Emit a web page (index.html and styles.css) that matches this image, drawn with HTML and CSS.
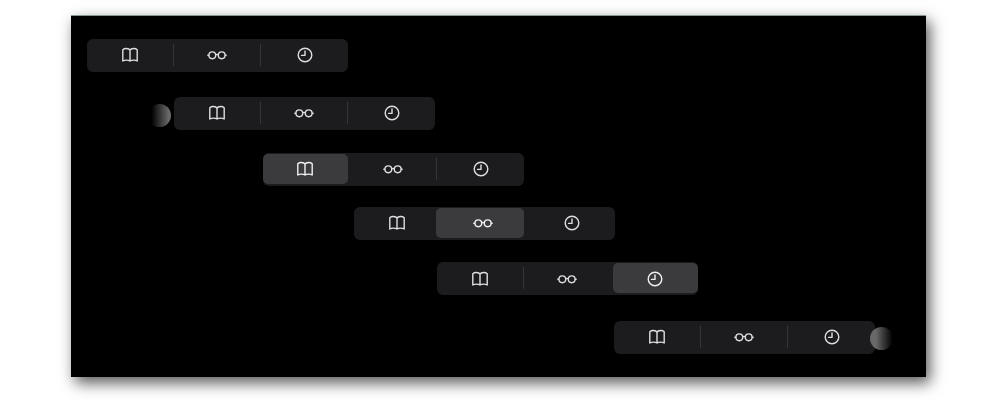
FILE: index.html
```html
<!DOCTYPE html>
<html lang="en">
<head>
<meta charset="utf-8">
<meta name="viewport" content="width=device-width, initial-scale=1">
<link rel="stylesheet" href="styles.css">
</head>
<body>
<svg class="sprite" aria-hidden="true">
  <symbol id="book" viewBox="0 0 18 16">
    <path d="M9 3.200C7.800 1.200 3.800.9 1.800 2.800V14C3.800 12.800 7.300 12.900 9 14C10.700 12.900 14.200 12.800 16.200 14V2.800C14.200.9 10.200 1.200 9 3.200ZM9 3.200V14"/>
  </symbol>
  <symbol id="glasses" viewBox="0 0 20 16">
    <circle cx="5.300" cy="8.300" r="3.400"/>
    <circle cx="14.700" cy="8.300" r="3.400"/>
    <path d="M.8 8.200H1.700M18.300 8.200H19.200M8.700 7.800Q10 7 11.300 7.800"/>
  </symbol>
  <symbol id="clock" viewBox="0 0 16 16">
    <circle cx="8" cy="8" r="6.800"/>
    <path d="M8 4V8.400H4.500"/>
  </symbol>
</svg>
<main class="panel">
  <div class="bar bar-1" role="group">
    <button class="segment" aria-label="Book"><svg class="icon icon-book"><use href="#book"/></svg></button>
    <button class="segment" aria-label="Glasses"><svg class="icon icon-glasses"><use href="#glasses"/></svg></button>
    <button class="segment" aria-label="Clock"><svg class="icon icon-clock"><use href="#clock"/></svg></button>
  </div>
  <div class="bar bar-2" role="group">
    <span class="orb orb-before"></span>
    <button class="segment" aria-label="Book"><svg class="icon icon-book"><use href="#book"/></svg></button>
    <button class="segment" aria-label="Glasses"><svg class="icon icon-glasses"><use href="#glasses"/></svg></button>
    <button class="segment" aria-label="Clock"><svg class="icon icon-clock"><use href="#clock"/></svg></button>
  </div>
  <div class="bar bar-3" role="group">
    <button class="segment selected first" aria-label="Book"><svg class="icon icon-book"><use href="#book"/></svg></button>
    <button class="segment" aria-label="Glasses"><svg class="icon icon-glasses"><use href="#glasses"/></svg></button>
    <button class="segment" aria-label="Clock"><svg class="icon icon-clock"><use href="#clock"/></svg></button>
  </div>
  <div class="bar bar-4" role="group">
    <button class="segment" aria-label="Book"><svg class="icon icon-book"><use href="#book"/></svg></button>
    <button class="segment selected middle" aria-label="Glasses"><svg class="icon icon-glasses"><use href="#glasses"/></svg></button>
    <button class="segment" aria-label="Clock"><svg class="icon icon-clock"><use href="#clock"/></svg></button>
  </div>
  <div class="bar bar-5" role="group">
    <button class="segment" aria-label="Book"><svg class="icon icon-book"><use href="#book"/></svg></button>
    <button class="segment" aria-label="Glasses"><svg class="icon icon-glasses"><use href="#glasses"/></svg></button>
    <button class="segment selected last" aria-label="Clock"><svg class="icon icon-clock"><use href="#clock"/></svg></button>
  </div>
  <div class="bar bar-6" role="group">
    <button class="segment" aria-label="Book"><svg class="icon icon-book"><use href="#book"/></svg></button>
    <button class="segment" aria-label="Glasses"><svg class="icon icon-glasses"><use href="#glasses"/></svg></button>
    <button class="segment" aria-label="Clock"><svg class="icon icon-clock"><use href="#clock"/></svg></button>
    <span class="orb orb-after"></span>
  </div>
</main>
</body>
</html>
```
FILE: styles.css
```css
* {
  box-sizing: border-box;
}

body {
  margin: 0;
  padding: 15px 74px 25px 71px;
  background: #fff;
  font-family: "Liberation Sans", Arial, sans-serif;
}

.sprite {
  position: absolute;
  width: 0;
  height: 0;
}

.panel {
  display: flex;
  flex-direction: column;
  align-items: flex-start;
  padding: 23px 16px;
  background: #000;
  border-top: 1px solid #8b9594;
  box-shadow: 4px 6px 14px rgba(0, 0, 0, 0.65);
}

.bar {
  position: relative;
  display: grid;
  grid-template-columns: repeat(3, 1fr);
  width: 261px;
  height: 33px;
  border-radius: 6px;
  background: #1c1c1e;
}

.bar-2 { margin: 25px 0 0 87px; }
.bar-3 { margin: 23px 0 0 176px; }
.bar-4 { margin: 21px 0 0 267px; }
.bar-5 { margin: 22px 0 0 350px; }
.bar-6 { margin: 26px 0 0 527px; }

.segment {
  position: relative;
  display: flex;
  align-items: center;
  justify-content: center;
  padding: 0 1px 1px 0;
  border: 0;
  background: none;
  color: #dededf;
}

.segment:nth-of-type(3) {
  padding-right: 0;
}

.bar-5 .segment {
  padding-bottom: 0;
}

/* Separator drawn on the leading edge of a segment. */
.segment + .segment::before {
  content: "";
  position: absolute;
  left: -1px;
  top: 5px;
  bottom: 6px;
  width: 1px;
  background: #353537;
}

.segment.selected::before,
.segment.selected + .segment::before {
  display: none;
}

.selected {
  color: #f0f0f2;
}

/* Highlight behind the icon of the selected segment. */
.selected::after {
  content: "";
  position: absolute;
  inset: 1px 0 2px;
  border-radius: 5px;
  background: #3b3b3d;
}

.selected.first::after { right: 2px; }
.selected.middle::after { left: -5px; right: 4px; }
.selected.last::after { left: 2px; }

.selected.first,
.selected.middle {
  padding-right: 3px;
}

.icon {
  position: relative;
  z-index: 1;
  height: 16px;
  fill: none;
  stroke: currentColor;
  stroke-width: 1.4;
  stroke-linejoin: round;
  stroke-linecap: round;
}

.icon-book { width: 18px; }
.icon-glasses { width: 20px; }
.icon-clock { width: 16px; }

.orb {
  position: absolute;
  top: 7px;
  width: 23px;
  height: 23px;
  border-radius: 50%;
}

.orb-before {
  left: -26px;
  background: linear-gradient(to right, #000 15%, #69696a 90%);
}

.orb-after {
  top: 6px;
  left: 256px;
  background: linear-gradient(to right, #69696a 25%, #000 98%);
}
```
